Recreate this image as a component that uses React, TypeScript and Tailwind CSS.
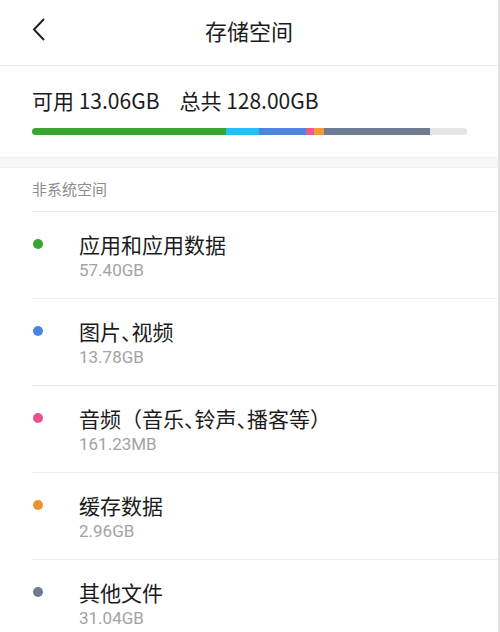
const font = { fontFamily: '"Noto Sans CJK SC", "Noto Sans", sans-serif' };
const numFont = { fontFamily: 'Roboto, "Noto Sans", sans-serif' };

interface Item {
  name: string;
  size: string;
  color: string;
}

const items: Item[] = [
  { name: "应用和应用数据", size: "57.40GB", color: "bg-[#3aa52f]" },
  { name: "图片、视频", size: "13.78GB", color: "bg-[#4a86e0]" },
  { name: "音频（音乐、铃声、播客等）", size: "161.23MB", color: "bg-[#e8508f]" },
  { name: "缓存数据", size: "2.96GB", color: "bg-[#f0922b]" },
  { name: "其他文件", size: "31.04GB", color: "bg-[#6e7b91]" },
];

// 、 is set half width, brackets stay full width
function Title({ text }: { text: string }) {
  const parts = text.split(/([（）])/);
  return (
    <span className="text-[21px] leading-[24px] text-[#1b1b1b] [font-feature-settings:'halt']">
      {parts.map((p, i) =>
        p === "（" || p === "）" ? (
          <span key={i} className="[font-feature-settings:normal]">{p}</span>
        ) : (
          p
        )
      )}
    </span>
  );
}

function Row({ name, size, color }: Item) {
  return (
    <div className="ml-8 h-[87px] border-t border-[#ececec] flex">
      <div className="w-[47px] pt-[27px]">
        <div className={`w-[10px] h-[10px] rounded-full ml-px ${color}`} />
      </div>
      <div className="flex flex-col pt-[20px]">
        <Title text={name} />
        <span className="mt-[4px] text-[17px] leading-[20px] text-[#a3a3a3]" style={numFont}>{size}</span>
      </div>
    </div>
  );
}

function App() {
  return (
    <div className="w-[500px] h-[632px] overflow-hidden bg-white border-r-2 border-[#e3e3e3]" style={font}>
      {/* header */}
      <div className="h-[66px] border-b border-[#e8e8e8] pt-[18px] relative">
        <svg className="absolute left-[31px] top-[17px]" width="16" height="25" viewBox="0 0 16 25">
          <path d="M13 2 L3 12.5 L13 23" fill="none" stroke="#222" strokeWidth="2" />
        </svg>
        <h1 className="w-full text-center text-[22px] text-[#1b1b1b] leading-[24px]">存储空间</h1>
      </div>

      {/* summary */}
      <div className="h-[91px] px-8 pt-[20px]">
        <div className="text-[21px] leading-[28px] text-[#1b1b1b] flex">
          <span>可用 13.06GB</span>
          <span className="ml-[20px]">总共 128.00GB</span>
        </div>
        <div className="mt-[14px] w-[435px] h-[7px] rounded-full bg-[#e5e5e5] flex overflow-hidden">
          <div className="w-[194px] bg-[#3aa52f]" />
          <div className="w-[33px] bg-[#1fc0f5]" />
          <div className="w-[47px] bg-[#4f86dd]" />
          <div className="w-[8px] bg-[#ec5a93]" />
          <div className="w-[10px] bg-[#f29b35]" />
          <div className="w-[106px] bg-[#6f7d93]" />
        </div>
      </div>

      <div className="h-[11px] bg-[#f7f7f7] border-y border-[#efefef]" />

      <div className="h-[43px] px-8 flex items-center text-[15px] text-[#8c8c8c]">非系统空间</div>

      {items.map((it) => (
        <Row key={it.name} {...it} />
      ))}
    </div>
  );
}

export default App;
